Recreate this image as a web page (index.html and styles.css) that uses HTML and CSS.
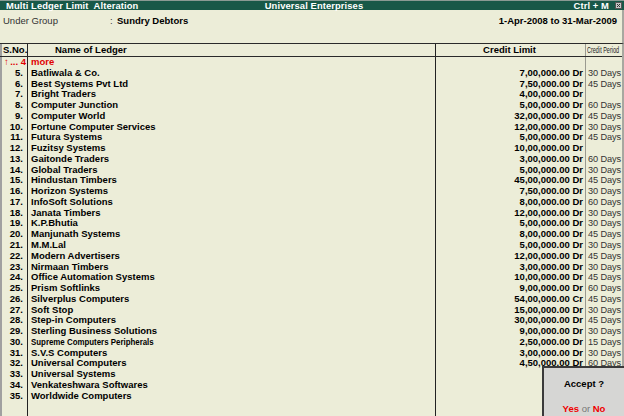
FILE: index.html
```html
<!DOCTYPE html>
<html>
<head>
<meta charset="utf-8">
<link rel="stylesheet" href="styles.css">
</head>
<body>
<div class="window">
  <div class="titlebar">
    <span class="t-left">Multi Ledger Limit&nbsp; Alteration</span>
    <span class="t-center">Universal Enterprises</span>
    <span class="t-right">Ctrl + M
      <svg class="close" width="7" height="7" viewBox="0 0 7 7"><rect x="0.5" y="0.5" width="6" height="6" fill="#c8c8c8" stroke="#555"/><path d="M2 2 L5 5 M5 2 L2 5" stroke="#333" stroke-width="1"/></svg>
    </span>
  </div>
  <div class="info">
    <div class="group"><span class="lbl">Under Group</span><span class="colon">:</span><span class="val">Sundry Debtors</span></div>
    <div class="period">1-Apr-2008 to 31-Mar-2009</div>
  </div>
  <div class="table">
    <div class="row head">
      <div class="c sno">S.No.</div>
      <div class="c name">Name of Ledger</div>
      <div class="c credit">Credit Limit</div>
      <div class="c days"><span class="squeeze">Credit Period</span></div>
    </div>
    <div class="body">
      <div class="row more">
        <div class="c sno"><span>↑</span><span>... 4</span></div>
        <div class="c name">more</div>
        <div class="c credit"></div>
        <div class="c days"></div>
      </div>
      <div class="row"><div class="c sno">5.</div><div class="c name">Batliwala &amp; Co.</div><div class="c credit">7,00,000.00 Dr</div><div class="c days">30 Days</div></div>
      <div class="row"><div class="c sno">6.</div><div class="c name">Best Systems Pvt Ltd</div><div class="c credit">7,50,000.00 Dr</div><div class="c days">45 Days</div></div>
      <div class="row"><div class="c sno">7.</div><div class="c name">Bright Traders</div><div class="c credit">4,00,000.00 Dr</div><div class="c days"></div></div>
      <div class="row"><div class="c sno">8.</div><div class="c name">Computer Junction</div><div class="c credit">5,00,000.00 Dr</div><div class="c days">60 Days</div></div>
      <div class="row"><div class="c sno">9.</div><div class="c name">Computer World</div><div class="c credit">32,00,000.00 Dr</div><div class="c days">45 Days</div></div>
      <div class="row"><div class="c sno">10.</div><div class="c name">Fortune Computer Services</div><div class="c credit">12,00,000.00 Dr</div><div class="c days">30 Days</div></div>
      <div class="row"><div class="c sno">11.</div><div class="c name">Futura Systems</div><div class="c credit">5,00,000.00 Dr</div><div class="c days">45 Days</div></div>
      <div class="row"><div class="c sno">12.</div><div class="c name">Fuzitsy Systems</div><div class="c credit">10,00,000.00 Dr</div><div class="c days"></div></div>
      <div class="row"><div class="c sno">13.</div><div class="c name">Gaitonde Traders</div><div class="c credit">3,00,000.00 Dr</div><div class="c days">60 Days</div></div>
      <div class="row"><div class="c sno">14.</div><div class="c name">Global Traders</div><div class="c credit">5,00,000.00 Dr</div><div class="c days">30 Days</div></div>
      <div class="row"><div class="c sno">15.</div><div class="c name">Hindustan Timbers</div><div class="c credit">45,00,000.00 Dr</div><div class="c days">45 Days</div></div>
      <div class="row"><div class="c sno">16.</div><div class="c name">Horizon Systems</div><div class="c credit">7,50,000.00 Dr</div><div class="c days">30 Days</div></div>
      <div class="row"><div class="c sno">17.</div><div class="c name">InfoSoft Solutions</div><div class="c credit">8,00,000.00 Dr</div><div class="c days">60 Days</div></div>
      <div class="row"><div class="c sno">18.</div><div class="c name">Janata Timbers</div><div class="c credit">12,00,000.00 Dr</div><div class="c days">30 Days</div></div>
      <div class="row"><div class="c sno">19.</div><div class="c name">K.P.Bhutia</div><div class="c credit">5,00,000.00 Dr</div><div class="c days">30 Days</div></div>
      <div class="row"><div class="c sno">20.</div><div class="c name">Manjunath Systems</div><div class="c credit">8,00,000.00 Dr</div><div class="c days">45 Days</div></div>
      <div class="row"><div class="c sno">21.</div><div class="c name">M.M.Lal</div><div class="c credit">5,00,000.00 Dr</div><div class="c days">30 Days</div></div>
      <div class="row"><div class="c sno">22.</div><div class="c name">Modern Advertisers</div><div class="c credit">12,00,000.00 Dr</div><div class="c days">45 Days</div></div>
      <div class="row"><div class="c sno">23.</div><div class="c name">Nirmaan Timbers</div><div class="c credit">3,00,000.00 Dr</div><div class="c days">30 Days</div></div>
      <div class="row"><div class="c sno">24.</div><div class="c name">Office Automation Systems</div><div class="c credit">10,00,000.00 Dr</div><div class="c days">45 Days</div></div>
      <div class="row"><div class="c sno">25.</div><div class="c name">Prism Softlinks</div><div class="c credit">9,00,000.00 Dr</div><div class="c days">60 Days</div></div>
      <div class="row"><div class="c sno">26.</div><div class="c name">Silverplus Computers</div><div class="c credit">54,00,000.00 Cr</div><div class="c days">45 Days</div></div>
      <div class="row"><div class="c sno">27.</div><div class="c name">Soft Stop</div><div class="c credit">15,00,000.00 Dr</div><div class="c days">30 Days</div></div>
      <div class="row"><div class="c sno">28.</div><div class="c name">Step-in Computers</div><div class="c credit">30,00,000.00 Dr</div><div class="c days">45 Days</div></div>
      <div class="row"><div class="c sno">29.</div><div class="c name">Sterling Business Solutions</div><div class="c credit">9,00,000.00 Dr</div><div class="c days">30 Days</div></div>
      <div class="row"><div class="c sno">30.</div><div class="c name"><span class="narrow">Supreme Computers Peripherals</span></div><div class="c credit">2,50,000.00 Dr</div><div class="c days">15 Days</div></div>
      <div class="row"><div class="c sno">31.</div><div class="c name">S.V.S Computers</div><div class="c credit">3,00,000.00 Dr</div><div class="c days">30 Days</div></div>
      <div class="row"><div class="c sno">32.</div><div class="c name">Universal Computers</div><div class="c credit">4,50,000.00 Dr</div><div class="c days">60 Days</div></div>
      <div class="row"><div class="c sno">33.</div><div class="c name">Universal Systems</div><div class="c credit"></div><div class="c days"></div></div>
      <div class="row"><div class="c sno">34.</div><div class="c name">Venkateshwara Softwares</div><div class="c credit"></div><div class="c days"></div></div>
      <div class="row"><div class="c sno">35.</div><div class="c name">Worldwide Computers</div><div class="c credit"></div><div class="c days"></div></div>
      <div class="row filler"><div class="c sno"></div><div class="c name"></div><div class="c credit"></div><div class="c days"></div></div>
    </div>
  </div>
  <div class="accept">
    <div class="q">Accept ?</div>
    <div class="yn"><span class="red">Yes</span> <span class="or">or</span> <span class="red">No</span></div>
  </div>
</div>
</body>
</html>
```

FILE: styles.css
```css
* { box-sizing: border-box; }
html, body { margin: 0; padding: 0; }
body {
  width: 624px;
  height: 416px;
  overflow: hidden;
  background: #ecedd8;
  font-family: "Liberation Sans", Arial, sans-serif;
  font-size: 9.5px;
  color: #000;
}
.window {
  position: relative;
  width: 624px;
  height: 416px;
  display: flex;
  flex-direction: column;
  overflow: hidden;
}
.titlebar {
  height: 10px;
  background: #185848;
  border-top: 1px solid #8a9a94;
  color: #fff;
  font-weight: bold;
  font-size: 9.4px;
  line-height: 9px;
  display: grid;
  grid-template-columns: 1fr auto 1fr;
  align-items: center;
  padding: 0 2px 0 6px;
  letter-spacing: 0.1px;
}
.t-center { text-align: center; }
.t-right {
  display: flex;
  justify-content: flex-end;
  align-items: center;
  gap: 6px;
}
.close { display: block; }
.info {
  height: 33px;
  display: flex;
  justify-content: space-between;
  align-items: flex-start;
  padding: 5px 5px 0 3px;
  line-height: 12px;
  border-right: 2px solid #a8a8a0;
}
.group { display: flex; }
.lbl { color: #333; width: 107px; }
.colon { color: #333; width: 7px; }
.val, .period { font-weight: bold; }
.table {
  flex: 1;
  display: flex;
  flex-direction: column;
  border-top: 1px solid #2a2a2a;
  border-right: 2px solid #a8a8a0;
}
.row {
  display: grid;
  grid-template-columns: 28px 408px 150px 36px;
  height: 10.77px;
  line-height: 10.77px;
  font-weight: bold;
  white-space: nowrap;
}
.c { overflow: hidden; }
.sno {
  border-right: 1px solid #222;
  text-align: right;
  padding-right: 4px;
  border-left: 2px solid #a0a0a0;
}
.name {
  border-right: 1px solid #222;
  padding-left: 3px;
}
.credit {
  border-right: 1px solid #9a9a90;
  text-align: right;
  padding-right: 2px;
}
.days {
  font-weight: normal;
  font-size: 9.2px;
  color: #333;
  padding-left: 2px;
  letter-spacing: -0.1px;
}
.head {
  height: 13px;
  line-height: 12px;
  border-bottom: 1px solid #2a2a2a;
}
.head .sno { text-align: left; padding-left: 1px; padding-right: 0; }
.head .name { padding-left: 27px; }
.head .credit { text-align: center; }
.head .days {
  font-size: 8.6px;
  padding-left: 1px;
  color: #222;
  letter-spacing: 0;
}
.squeeze {
  display: inline-block;
  transform: scaleX(0.64);
  transform-origin: left center;
}
.body {
  flex: 1;
  display: flex;
  flex-direction: column;
}
.more { color: #e00000; }
.more .sno {
  display: flex;
  justify-content: space-between;
  padding-left: 2px;
  padding-right: 1px;
}
.more .sno span:first-child { font-weight: normal; }
.narrow {
  display: inline-block;
  transform: scaleX(0.83);
  transform-origin: left center;
}
.filler { flex: 1; height: auto; }
.accept {
  position: absolute;
  right: 0;
  bottom: 0;
  width: 82px;
  height: 50px;
  background: #d6d6d4;
  border-top: 2px solid #3a3a3a;
  border-left: 2px solid #3a3a3a;
  text-align: center;
  font-weight: bold;
}
.q { margin-top: 10px; line-height: 12px; }
.yn { margin-top: 13px; line-height: 12px; }
.red { color: #f00000; }
.or { color: #777; font-weight: normal; }
```
